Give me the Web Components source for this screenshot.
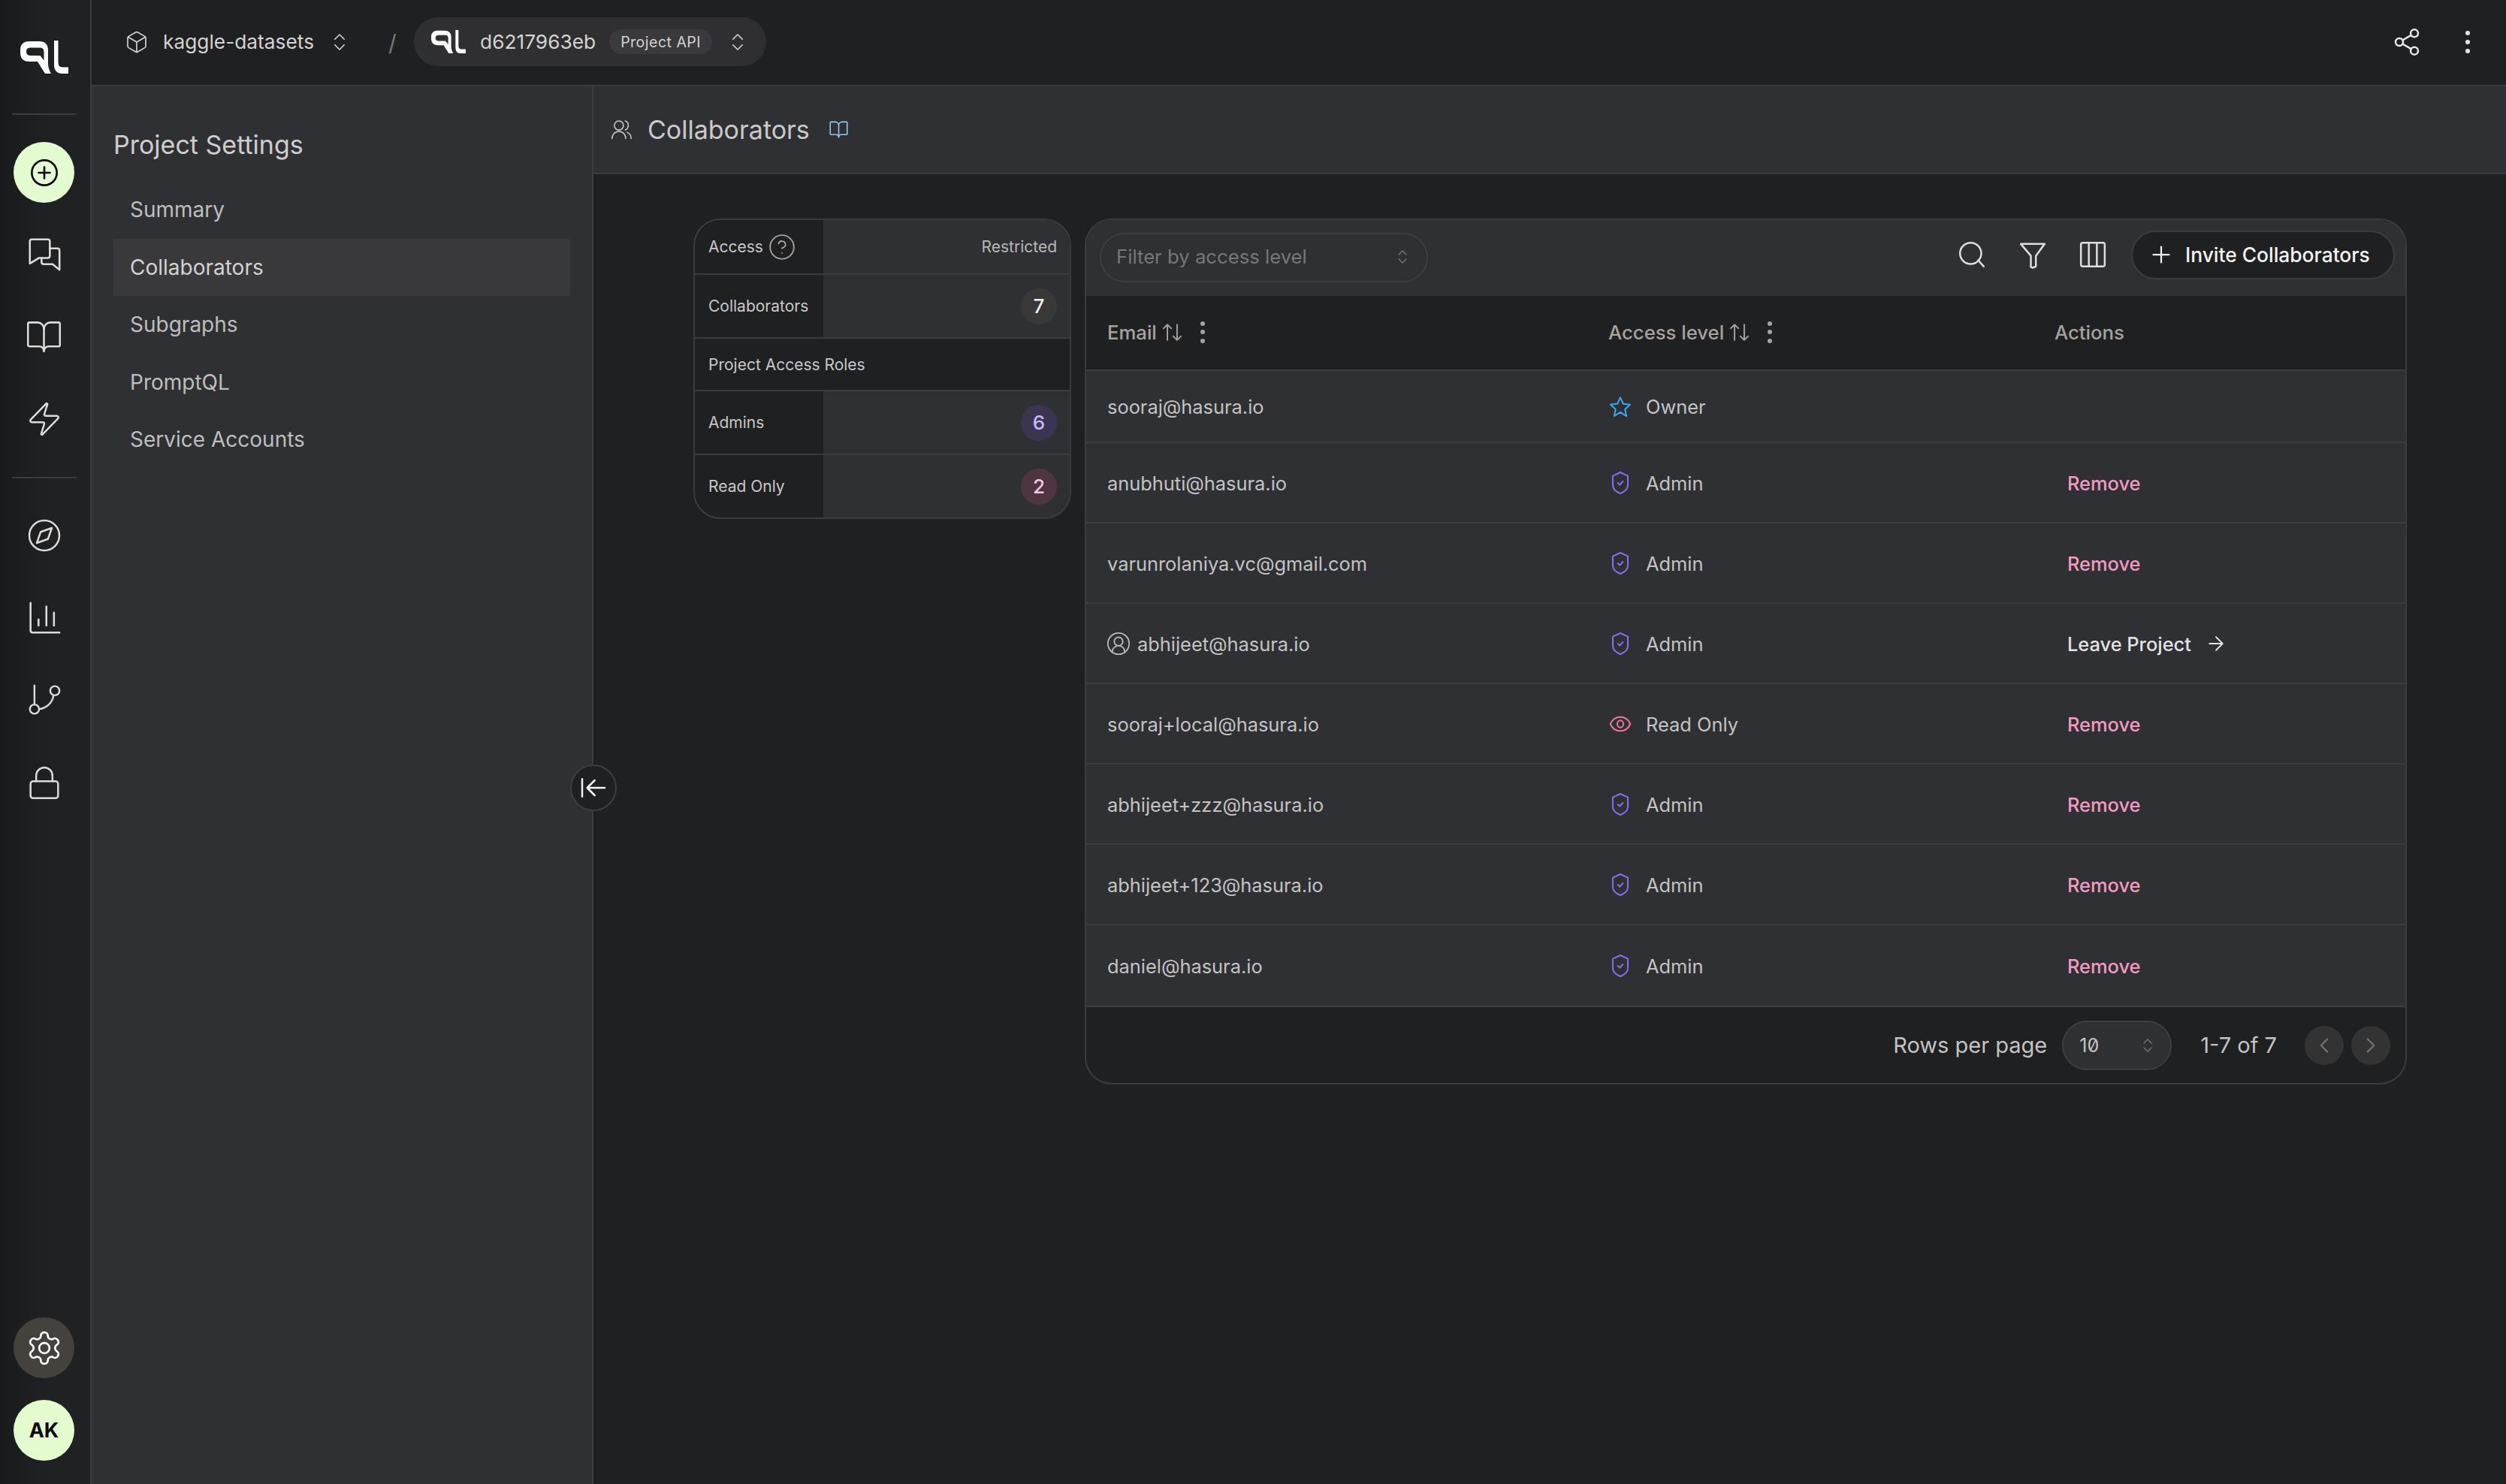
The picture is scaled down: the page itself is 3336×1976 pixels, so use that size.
<!DOCTYPE html>
<html lang="en">
<head>
<meta charset="UTF-8">
<title>Project Settings - Collaborators</title>
<style>
  html, body { margin: 0; height: 100%; background: #1f2022; }
  body { font-family: Inter, "Liberation Sans", sans-serif; color: #c9c8c6; }
</style>
</head>
<body>
<app-shell>
  <app-rail slot="rail"></app-rail>
  <app-topbar slot="top"></app-topbar>
  <settings-nav slot="nav" heading="Project Settings">
    <nav-link>Summary</nav-link>
    <nav-link active>Collaborators</nav-link>
    <nav-link>Subgraphs</nav-link>
    <nav-link>PromptQL</nav-link>
    <nav-link>Service Accounts</nav-link>
  </settings-nav>
  <page-header slot="header">Collaborators</page-header>
  <access-card slot="aside"></access-card>
  <collab-table slot="main">
    <collab-row role-name="Owner" row-h="96">sooraj@hasura.io</collab-row>
    <collab-row role-name="Admin" action="Remove">anubhuti@hasura.io</collab-row>
    <collab-row role-name="Admin" action="Remove">varunrolaniya.vc@gmail.com</collab-row>
    <collab-row role-name="Admin" action="Leave Project" me>abhijeet@hasura.io</collab-row>
    <collab-row role-name="Read Only" action="Remove">sooraj+local@hasura.io</collab-row>
    <collab-row role-name="Admin" action="Remove">abhijeet+zzz@hasura.io</collab-row>
    <collab-row role-name="Admin" action="Remove">abhijeet+123@hasura.io</collab-row>
    <collab-row role-name="Admin" action="Remove">daniel@hasura.io</collab-row>
  </collab-table>
</app-shell>

<script>
  // all icons live here, 24x24 box
  const ICONS = {
    'plus-circle': '<circle cx="12" cy="12" r="10"/><path d="M12 7.5v9M7.5 12h9"/>',
    chat: '<path d="M2.5 1h12A1.500 1.500 0 0 1 16 2.500V13a1.500 1.500 0 0 1-1.500 1.500H8l-6.500 4V2.500A1.500 1.500 0 0 1 2.500 1z"/><path d="M16 7.500h5.500A1.500 1.500 0 0 1 23 9v14l-5-4h-6.500A1.500 1.500 0 0 1 10 17.500v-3"/>',
    book: '<path d="M12 7v14"/><path d="M3 18a1 1 0 0 1-1-1V4a1 1 0 0 1 1-1h5a4 4 0 0 1 4 4 4 4 0 0 1 4-4h5a1 1 0 0 1 1 1v13a1 1 0 0 1-1 1h-6a3 3 0 0 0-3 3 3 3 0 0 0-3-3z"/>',
    bolt: '<path d="M4 14a1 1 0 0 1-.78-1.63l9.9-10.2a.5.5 0 0 1 .86.46l-1.92 6.02A1 1 0 0 0 13 10h7a1 1 0 0 1 .78 1.63l-9.9 10.2a.5.5 0 0 1-.86-.46l1.92-6.02A1 1 0 0 0 11 14z"/>',
    compass: '<circle cx="12" cy="12" r="10"/><path d="m17 7-2.6 7.4L7 17l2.6-7.4z"/>',
    chart: '<path d="M2 1v20a1.500 1.500 0 0 0 1.500 1.500H23"/><path d="M7.800 17.500V13M13.500 17.500V3.500M19 17.500V8"/>',
    branch: '<path d="M4.500 1v14.500"/><circle cx="4.500" cy="19" r="3.500"/><circle cx="20" cy="5" r="3.500"/><path d="M19 8.500c-.8 5.500-5 9.500-11 10.500"/>',
    lock: '<rect x="1" y="11" width="22" height="13.500" rx="2"/><path d="M5.500 11V6.500a6.500 6.500 0 0 1 13 0V11"/>',
    gear: '<path d="M12.220 2h-.44a2 2 0 0 0-2 2v.18a2 2 0 0 1-1 1.730l-.43.25a2 2 0 0 1-2 0l-.15-.08a2 2 0 0 0-2.730.73l-.22.38a2 2 0 0 0 .73 2.730l.15.1a2 2 0 0 1 1 1.720v.51a2 2 0 0 1-1 1.740l-.15.09a2 2 0 0 0-.73 2.730l.22.38a2 2 0 0 0 2.730.73l.15-.08a2 2 0 0 1 2 0l.43.25a2 2 0 0 1 1 1.730V20a2 2 0 0 0 2 2h.44a2 2 0 0 0 2-2v-.18a2 2 0 0 1 1-1.730l.43-.25a2 2 0 0 1 2 0l.15.08a2 2 0 0 0 2.730-.73l.22-.39a2 2 0 0 0-.73-2.730l-.15-.08a2 2 0 0 1-1-1.740v-.5a2 2 0 0 1 1-1.740l.15-.09a2 2 0 0 0 .73-2.730l-.22-.38a2 2 0 0 0-2.730-.73l-.15.08a2 2 0 0 1-2 0l-.43-.25a2 2 0 0 1-1-1.730V4a2 2 0 0 0-2-2z"/><circle cx="12" cy="12" r="3.300"/>',
    cube: '<path d="M21 8a2 2 0 0 0-1-1.730l-7-4a2 2 0 0 0-2 0l-7 4A2 2 0 0 0 3 8v8a2 2 0 0 0 1 1.730l7 4a2 2 0 0 0 2 0l7-4A2 2 0 0 0 21 16Z"/><path d="m3.300 7 8.700 5 8.700-5M12 22V12"/>',
    updown: '<path d="m7 15 5 5 5-5M7 9l5-5 5 5"/>',
    share: '<circle cx="18" cy="5" r="3"/><circle cx="6" cy="12" r="3"/><circle cx="18" cy="19" r="3"/><path d="m8.590 13.510 6.830 3.980M15.410 6.510l-6.820 3.980"/>',
    users: '<circle cx="9" cy="7.500" r="5"/><path d="M1.500 22c0-4.500 3-8 7.500-8s7.500 3.500 7.500 8"/><path d="M16 2.500c2 .6 3.300 2.600 3.300 5s-1.300 4.200-3.300 5"/><path d="M18 15c2.700 1 4.500 3.800 4.500 7"/>',
    help: '<circle cx="12" cy="12" r="10"/><path d="M9.090 9a3 3 0 0 1 5.830 1c0 2-3 3-3 3"/><path d="M12 17h.01"/>',
    search: '<circle cx="11" cy="11" r="8.500"/><path d="m21.500 21.500-4.500-5"/>',
    filter: '<path d="M2.500 3.500h19L14.500 13v8.500L12 22.500l-1.500-.5v-9z"/>',
    columns: '<rect x="2.500" y="2.500" width="19" height="19" rx="1.500"/><path d="M8.800 2.500v19M15.200 2.500v19"/>',
    plus: '<path d="M5 12h14M12 5v14"/>',
    sort: '<path d="m21 16-4 4-4-4M17 20V4M3 8l4-4 4 4M7 4v16"/>',
    star: '<path d="M12 2.500l2.900 6.300 6.800.8-5 4.700 1.400 6.800L12 17.100l-6.100 3.900 1.400-6.800-5-4.700 6.800-.8z"/>',
    shield: '<path d="M12 1.500 19.500 5v9.500c0 4-3.500 6.500-7.500 8-4-1.500-7.500-4-7.500-8V5z"/><path d="m9.500 12 2 2 3-3.500"/>',
    eye: '<path d="M2 12c2-4.500 5.500-7 10-7s8 2.500 10 7c-2 4.500-5.500 7-10 7s-8-2.500-10-7z"/><ellipse cx="12" cy="12" rx="3" ry="3.500"/>',
    'user-circle': '<circle cx="12" cy="12" r="10"/><circle cx="12" cy="10" r="4"/><path d="M18 20a6 6 0 0 0-12 0"/>',
    'arrow-right': '<path d="M5 12h14M12 5l7 7-7 7"/>',
    'arrow-left-line': '<path d="M3 19V5M13 6l-6 6 6 6M7 12h14"/>',
    'chevron-left': '<path d="m15 18-6-6 6-6"/>',
    'chevron-right': '<path d="m9 18 6-6-6-6"/>'
  };

  class AppIcon extends HTMLElement {
    connectedCallback() {
      const size = this.getAttribute('size') || 24;
      const sw = this.getAttribute('sw') || 1.5;
      this.attachShadow({ mode: 'open' });
      this.shadowRoot.innerHTML = `
        <style>
          :host { display: inline-flex; flex: none; width: ${size}px; height: ${size}px; }
          svg { display: block; overflow: visible; }
        </style>
        <svg width="${size}" height="${size}" viewBox="0 0 24 24" fill="none" stroke="currentColor"
             stroke-width="${sw}" stroke-linecap="round" stroke-linejoin="round">${ICONS[this.getAttribute('name')]}</svg>`;
    }
  }
  customElements.define('app-icon', AppIcon);

  class QlLogo extends HTMLElement {
    connectedCallback() {
      const w = this.getAttribute('w') || 64;
      this.attachShadow({ mode: 'open' });
      this.shadowRoot.innerHTML = `
        <style>:host { display: inline-flex; flex: none; color: #fff; } svg { display: block; }</style>
        <svg width="${w}" viewBox="0 0 64 44" fill="currentColor" fill-rule="evenodd">
          <path d="M12 1H25Q37 1 37 13V31Q37 37 41 44H33L23 28H12Q0 28 0 16V13Q0 1 12 1ZM14 9.500Q8 9.500 8 14.500Q8 20 14 20H26.500L31.500 26.500V15Q31.500 9.500 26 9.500Z"/>
          <path d="M45 0H50.500V29Q50.500 35.500 56 35.500H64V44H56Q45 44 45 32Z"/>
        </svg>`;
    }
  }
  customElements.define('ql-logo', QlLogo);

  class AppShell extends HTMLElement {
    connectedCallback() {
      this.attachShadow({ mode: 'open' });
      this.shadowRoot.innerHTML = `
        <style>
          :host { display: flex; width: 100%; height: 1976px; overflow: hidden; background: #1f2022; }
          .col { flex: 1; min-width: 0; display: flex; flex-direction: column; }
          .body { flex: 1; min-height: 0; display: flex; }
          .content { flex: 1; min-width: 0; display: flex; flex-direction: column; }
          .scroll { flex: 1; display: flex; align-items: flex-start; gap: 18px; padding: 59px 132px 0 133px; }
          .side { position: relative; display: flex; flex: none; }
          /* round handle that sits over the sidebar border */
          .handle {
            position: absolute; left: 637px; top: 903px; width: 62px; height: 62px; box-sizing: border-box;
            display: flex; align-items: center; justify-content: center;
            border-radius: 50%; border: 2px solid #3d3e41; background: #1f2022; color: #f2f2f2;
          }
        </style>
        <slot name="rail"></slot>
        <div class="col">
          <slot name="top"></slot>
          <div class="body">
            <div class="side">
              <slot name="nav"></slot>
              <div class="handle"><app-icon name="arrow-left-line" size="40"></app-icon></div>
            </div>
            <div class="content">
              <slot name="header"></slot>
              <div class="scroll">
                <slot name="aside"></slot>
                <slot name="main"></slot>
              </div>
            </div>
          </div>
        </div>`;
    }
  }
  customElements.define('app-shell', AppShell);

  class AppRail extends HTMLElement {
    connectedCallback() {
      this.attachShadow({ mode: 'open' });
      this.shadowRoot.innerHTML = `
        <style>
          :host {
            display: flex; flex-direction: column; align-items: center; flex: none; box-sizing: content-box;
            width: 117px; padding-right: 3px; height: 1976px; border-right: 2px solid #3b3c3f;
            background: linear-gradient(90deg, #1a1b1d, #202123 60%); color: #dcdbd9;
          }
          .logo { height: 151px; display: flex; align-items: center; justify-content: center; }
          hr { width: 86px; height: 2px; margin: 0; border: 0; background: #3b3c3f; flex: none; }
          .group { display: flex; flex-direction: column; gap: 28.500px; padding: 36px 0 36px; align-items: center; }
          .group.b { padding-top: 36px; }
          .item { width: 81px; height: 81px; display: flex; align-items: center; justify-content: center; border-radius: 50%; }
          .add { background: #e4fbcf; color: #0c0c0c; }
          .foot { margin-top: auto; display: flex; flex-direction: column; gap: 29px; padding-bottom: 31px; }
          .gear { background: #45423e; color: #fff; }
          .me { background: #e4fbcf; color: #0a0a0a; font: 700 27px Inter, sans-serif; }
        </style>
        <div class="logo"><ql-logo w="64"></ql-logo></div>
        <hr>
        <div class="group">
          <div class="item add"><app-icon name="plus-circle" size="40" sw="1.6"></app-icon></div>
          <div class="item"><app-icon name="chat" size="44" sw="1.400"></app-icon></div>
          <div class="item"><app-icon name="book" size="51" sw="1.200"></app-icon></div>
          <div class="item"><app-icon name="bolt" size="50" sw="1.200"></app-icon></div>
        </div>
        <hr>
        <div class="group b">
          <div class="item"><app-icon name="compass" size="48" sw="1.250"></app-icon></div>
          <div class="item"><app-icon name="chart" size="44" sw="1.400"></app-icon></div>
          <div class="item"><app-icon name="branch" size="42" sw="1.400"></app-icon></div>
          <div class="item"><app-icon name="lock" size="40"></app-icon></div>
        </div>
        <div class="foot">
          <div class="item gear"><app-icon name="gear" size="50" sw="1.300"></app-icon></div>
          <div class="item me">AK</div>
        </div>`;
    }
  }
  customElements.define('app-rail', AppRail);

  class AppTopbar extends HTMLElement {
    connectedCallback() {
      this.attachShadow({ mode: 'open' });
      this.shadowRoot.innerHTML = `
        <style>
          :host {
            display: flex; align-items: center; flex: none; height: 113px; border-bottom: 2px solid #3b3c3f;
            padding: 0 48px 0 44px; color: #d4d3d1; font-size: 26.300px; background: #1f2022;
          }
          .crumb { display: flex; align-items: center; height: 65px; margin-top: -2px; }
          .slash { color: #77777a; margin: 0 26px 0 0; font-size: 30px; width: 6px; margin-left: 50px; }
          .pill { margin-left: 2px; width: 469px; box-sizing: border-box; padding: 0 0 0 23px; background: #2f2f31; border-radius: 33px; }
          .name { margin-left: 19px; }
          .tag {
            margin-left: 18px; height: 33px; padding: 0 15px; display: flex; align-items: center;
            border-radius: 17px; background: #3a3a3c; font-size: 19.500px; letter-spacing: .5px;
          }
          .spacer { flex: 1; }
          .tools { display: flex; align-items: center; gap: 58px; margin-top: -1px; color: #e8e8e8; }
          .dots { width: 6px; display: flex; flex-direction: column; gap: 6.500px; }
          .dots i { width: 5.500px; height: 5.500px; border-radius: 50%; background: #e0e0e0; }
        </style>
        <div class="crumb">
          <app-icon name="cube" size="32" sw="1.250"></app-icon>
          <span class="name">kaggle-datasets</span>
          <app-icon name="updown" size="30" sw="1.300" style="margin-left:19px"></app-icon>
        </div>
        <span class="slash crumb">/</span>
        <div class="crumb pill">
          <ql-logo w="46"></ql-logo>
          <span class="name">d6217963eb</span>
          <span class="tag">Project API</span>
          <app-icon name="updown" size="30" sw="1.300" style="margin-left:19px"></app-icon>
        </div>
        <div class="spacer"></div>
        <div class="tools">
          <app-icon name="share" size="40"></app-icon>
          <div class="dots"><i></i><i></i><i></i></div>
        </div>`;
    }
  }
  customElements.define('app-topbar', AppTopbar);

  class SettingsNav extends HTMLElement {
    connectedCallback() {
      this.attachShadow({ mode: 'open' });
      this.shadowRoot.innerHTML = `
        <style>
          :host {
            display: flex; flex-direction: column; flex: none; box-sizing: content-box; width: 666px; height: 100%;
            border-right: 2px solid #3b3c3f; background: #2f3034;
          }
          h2 { margin: 0; padding: 56px 0 0 29px; font-weight: 400; font-size: 34px; line-height: 44px; color: #cfcecc; }
          .list { display: flex; flex-direction: column; gap: .6px; padding: 26px 29px 0 29px; }
        </style>
        <h2>${this.getAttribute('heading')}</h2>
        <div class="list"><slot></slot></div>`;
    }
  }
  customElements.define('settings-nav', SettingsNav);

  class NavLink extends HTMLElement {
    connectedCallback() {
      this.attachShadow({ mode: 'open' });
      this.shadowRoot.innerHTML = `
        <style>
          :host {
            display: flex; align-items: center; height: 76px; padding-left: 22px;
            font-size: 28px; color: #bfbebc;
          }
          :host([active]) { background: #39393c; color: #d3d2d0; }
        </style>
        <slot></slot>`;
    }
  }
  customElements.define('nav-link', NavLink);

  class PageHeader extends HTMLElement {
    connectedCallback() {
      this.attachShadow({ mode: 'open' });
      this.shadowRoot.innerHTML = `
        <style>
          :host {
            display: flex; align-items: center; flex: none; height: 115px; border-bottom: 2px solid #3b3c3f;
            padding-left: 23px; background: #2f3034; color: #cbcac8; font-size: 34px;
          }
          .title { margin-left: 20px; }
          .doc { margin-left: 25px; color: #8ccaf5; }
        </style>
        <app-icon name="users" size="29" sw="1.300"></app-icon>
        <span class="title"><slot></slot></span>
        <app-icon class="doc" name="book" size="27" sw="1.400"></app-icon>`;
    }
  }
  customElements.define('page-header', PageHeader);

  class CountBadge extends HTMLElement {
    connectedCallback() {
      this.attachShadow({ mode: 'open' });
      this.shadowRoot.innerHTML = `
        <style>
          :host {
            display: inline-flex; align-items: center; justify-content: center; width: 48px; height: 48px; border-radius: 50%;
            font-size: 26px; font-weight: 500; background: #383838; color: #f2f2f2;
          }
          :host([tone="violet"]) { background: #3b3552; color: #c9b8ff; }
          :host([tone="pink"]) { background: #4f3540; color: #fbc4dc; }
        </style>
        <slot></slot>`;
    }
  }
  customElements.define('count-badge', CountBadge);

  class AccessCard extends HTMLElement {
    connectedCallback() {
      this.attachShadow({ mode: 'open' });
      this.shadowRoot.innerHTML = `
        <style>
          :host {
            display: block; flex: none; width: 503px; box-sizing: border-box; overflow: hidden;
            border: 2px solid #3b3c3f; border-radius: 36px; background: #1f2022; font-size: 21px; color: #c9c8c6;
          }
          .row { display: grid; grid-template-columns: 171px 1fr; border-bottom: 2px solid #3b3c3f; box-sizing: border-box; }
          .row:last-child { border-bottom: 0; }
          .l { display: flex; align-items: center; gap: 6px; padding-left: 18px; }
          .v { display: flex; align-items: center; justify-content: flex-end; padding-right: 17px; background: #2f3034; color: #b9b8b6; }
          .h { display: flex; align-items: center; padding-left: 18px; height: 70px; box-sizing: border-box; border-bottom: 2px solid #3b3c3f; }
          app-icon { color: #a8a29e; }
        </style>
        <div class="row" style="height:73px"><div class="l">Access <app-icon name="help" size="38" sw="1.200"></app-icon></div><div class="v">Restricted</div></div>
        <div class="row" style="height:85px"><div class="l">Collaborators</div><div class="v"><count-badge>7</count-badge></div></div>
        <div class="h">Project Access Roles</div>
        <div class="row" style="height:85px"><div class="l">Admins</div><div class="v"><count-badge tone="violet">6</count-badge></div></div>
        <div class="row" style="height:83px"><div class="l">Read Only</div><div class="v"><count-badge tone="pink">2</count-badge></div></div>`;
    }
  }
  customElements.define('access-card', AccessCard);

  class CollabTable extends HTMLElement {
    connectedCallback() {
      this.attachShadow({ mode: 'open' });
      this.shadowRoot.innerHTML = `
        <style>
          :host {
            display: block; flex: 1; min-width: 0; box-sizing: border-box; overflow: hidden;
            border: 2px solid #3b3c3f; border-radius: 36px; background: #1f2022;
          }
          .bar { display: flex; align-items: center; height: 101px; padding: 0 14px 0 18px; box-sizing: border-box; background: #2f3034; }
          .select {
            display: flex; align-items: center; justify-content: space-between; box-sizing: border-box;
            width: 437px; height: 66px; padding: 0 20px 3px 20px; margin-top: -1px;
            border: 2px solid #3d3e41; border-radius: 33px; color: #77777a; font-size: 25.700px;
          }
          .spacer { flex: 1; }
          .tools { display: flex; align-items: center; gap: 40.500px; color: #dfdedc; margin-right: 31px; margin-top: -9px; }
          .invite {
            display: flex; align-items: center; gap: 14px; box-sizing: border-box; width: 351px; height: 65px; padding-left: 20px;
            margin-top: -9px; border: 2px solid #3b3c3f; border-radius: 33px; background: #1f2022; color: #f4f4f4;
            font-size: 26.400px; font-weight: 500;
          }
          .head {
            display: grid; grid-template-columns: 667px 594px 1fr; height: 100px; box-sizing: border-box;
            border-bottom: 2px solid #3b3c3f; color: #a8a29e; font-size: 25.700px; font-weight: 500;
          }
          .th { display: flex; align-items: center; padding-left: 28px; margin-top: -2px; }
          .th app-icon { margin-left: 5px; }
          .kebab { margin-left: 22px; display: flex; flex-direction: column; gap: 5.500px; }
          .kebab i { width: 6px; height: 6px; border-radius: 50%; background: #a8a29e; }
          .foot {
            display: flex; align-items: center; justify-content: flex-end; height: 103px; padding: 0 20px 0 0;
            border-top: 2px solid #3d3e41; box-sizing: border-box; font-size: 29px; color: #c4c3c1;
          }
          .per {
            display: flex; align-items: center; justify-content: space-between; box-sizing: border-box;
            width: 146px; height: 66px; margin: 0 38px 0 20px; padding: 0 18px 0 21px;
            border: 2px solid #3d3e41; border-radius: 33px; background: #2f3034; font-size: 25px;
            font-feature-settings: "zero";
          }
          .per app-icon { color: #77777a; }
          .nav { display: flex; gap: 10px; margin-left: 37px; }
          .nav span { width: 52px; height: 52px; border-radius: 50%; background: #333333; color: #77777a; display: flex; align-items: center; justify-content: center; }
        </style>
        <div class="bar">
          <div class="select">Filter by access level <app-icon name="updown" size="24" sw="1.400"></app-icon></div>
          <div class="spacer"></div>
          <div class="tools">
            <app-icon name="search" size="40"></app-icon>
            <app-icon name="filter" size="40"></app-icon>
            <app-icon name="columns" size="40"></app-icon>
          </div>
          <div class="invite"><app-icon name="plus" size="36"></app-icon> Invite Collaborators</div>
        </div>
        <div class="head">
          <div class="th">Email <app-icon name="sort" size="31"></app-icon><span class="kebab"><i></i><i></i><i></i></span></div>
          <div class="th">Access level <app-icon name="sort" size="31"></app-icon><span class="kebab"><i></i><i></i><i></i></span></div>
          <div class="th">Actions</div>
        </div>
        <slot></slot>
        <div class="foot">
          Rows per page
          <div class="per">10 <app-icon name="updown" size="24" sw="1.400"></app-icon></div>
          1-7 of 7
          <div class="nav">
            <span><app-icon name="chevron-left" size="34" sw="1.400"></app-icon></span>
            <span><app-icon name="chevron-right" size="34" sw="1.400"></app-icon></span>
          </div>
        </div>`;
    }
  }
  customElements.define('collab-table', CollabTable);

  const ROLE_STYLE = {
    Owner: { icon: 'star', color: '#38a8f5' },
    Admin: { icon: 'shield', color: '#8b6cf0' },
    'Read Only': { icon: 'eye', color: '#f472a6' }
  };

  class CollabRow extends HTMLElement {
    connectedCallback() {
      const role = this.getAttribute('role-name');
      const action = this.getAttribute('action');
      const st = ROLE_STYLE[role];
      let actionHtml = '';
      if (action === 'Remove') actionHtml = '<span class="remove">Remove</span>';
      else if (action) actionHtml = `<span class="leave">${action} <app-icon name="arrow-right" size="30"></app-icon></span>`;
      this.attachShadow({ mode: 'open' });
      this.shadowRoot.innerHTML = `
        <style>
          :host {
            display: grid; grid-template-columns: 667px 594px 1fr; height: ${this.getAttribute('row-h') || 107}px; box-sizing: border-box;
            border-bottom: 2px solid #3b3c3f; background: #2f3034; font-size: 25.400px; color: #c4c3c1;
          }
          :host(:last-child) { border-bottom: 0; }
          .c { display: flex; align-items: center; padding-left: 28px; padding-top: 1px; }
          .me { margin-right: 8px; margin-left: -2px; color: #b9b8b6; }
          .role app-icon { color: ${st.color}; margin-right: 18px; }
          .act { padding-left: 45px; font-weight: 500; }
          .remove { color: #f49ac1; }
          .leave { display: flex; align-items: center; gap: 18px; color: #e4e3e1; }
        </style>
        <div class="c">${this.hasAttribute('me') ? '<app-icon class="me" name="user-circle" size="34" sw="1.300"></app-icon>' : ''}<slot></slot></div>
        <div class="c role"><app-icon name="${st.icon}" size="32" sw="1.500"></app-icon>${role}</div>
        <div class="c act">${actionHtml}</div>`;
    }
  }
  customElements.define('collab-row', CollabRow);
</script>
</body>
</html>
